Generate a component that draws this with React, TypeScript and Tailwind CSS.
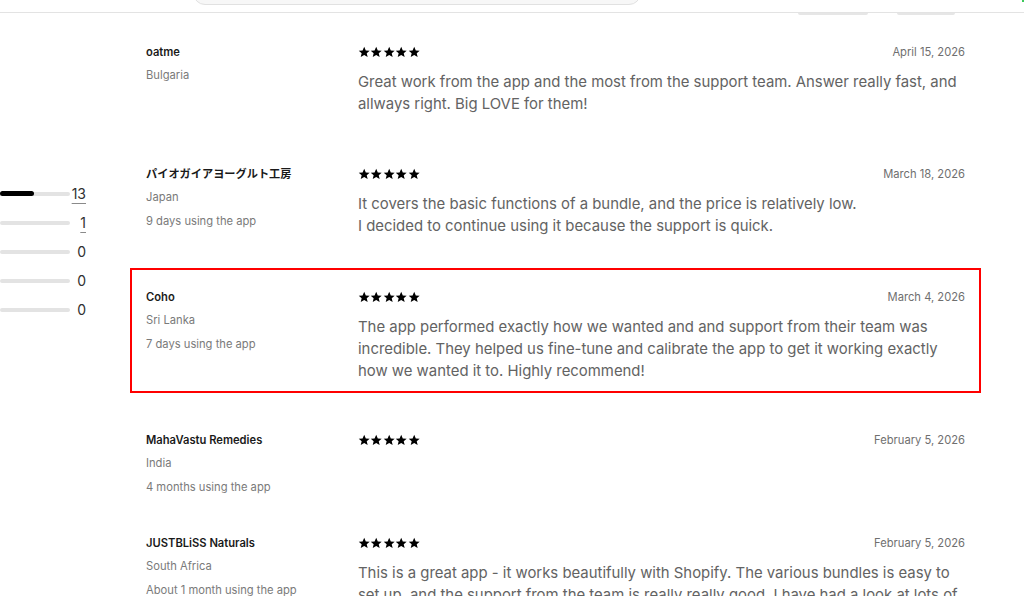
import { Fragment } from 'react';

type Review = {
  name: string;
  country: string;
  usage?: string;
  date: string;
  body: string[];
  highlight?: boolean;
  gap: string;
};

const reviews: Review[] = [
  {
    name: 'oatme',
    country: 'Bulgaria',
    date: 'April 15, 2026',
    body: ['Great work from the app and the most from the support team. Answer really fast, and allways right. Big LOVE for them!'],
    gap: 'mb-[19px]',
  },
  {
    name: 'パイオガイアヨーグルト工房',
    country: 'Japan',
    usage: '9 days using the app',
    date: 'March 18, 2026',
    body: [
      'It covers the basic functions of a bundle, and the price is relatively low.',
      'I decided to continue using it because the support is quick.',
    ],
    gap: 'mb-[20px]',
  },
  {
    name: 'Coho',
    country: 'Sri Lanka',
    usage: '7 days using the app',
    date: 'March 4, 2026',
    body: [
      'The app performed exactly how we wanted and and support from their team was incredible. They helped us fine-tune and calibrate the app to get it working exactly how we wanted it to. Highly recommend!',
    ],
    highlight: true,
    gap: 'mb-[18px]',
  },
  {
    name: 'MahaVastu Remedies',
    country: 'India',
    usage: '4 months using the app',
    date: 'February 5, 2026',
    body: [],
    gap: 'mb-[8px]',
  },
  {
    name: 'JUSTBLiSS Naturals',
    country: 'South Africa',
    usage: 'About 1 month using the app',
    date: 'February 5, 2026',
    body: [
      'This is a great app - it works beautifully with Shopify. The various bundles is easy to set up, and the support from the team is really really good. I have had a look at lots of other bundle apps and this one is by far the easiest to use.',
    ],
    gap: 'mb-[0px]',
  },
];

const ratings = [
  { count: 13, fill: 'w-[34px]', link: true },
  { count: 1, fill: 'w-0', link: true },
  { count: 0, fill: 'w-0', link: false },
  { count: 0, fill: 'w-0', link: false },
  { count: 0, fill: 'w-0', link: false },
];

function Stars() {
  return (
    <div className="flex items-center">
      {[0, 1, 2, 3, 4].map((i) => (
        <svg key={i} viewBox="0 0 24 24" className="w-[12.4px] h-[12.4px] fill-black">
          <path d="M12 1.5l3.1 7 7.5.6-5.7 4.9 1.8 7.4L12 17.5l-6.7 3.9 1.8-7.4-5.7-4.9 7.5-.6z" />
        </svg>
      ))}
    </div>
  );
}

export default function App() {
  return (
    <div className="h-[596px] w-[1024px] overflow-hidden bg-white font-[Inter,'Noto_Sans_CJK_JP',sans-serif]">
      <div className="flex h-[13px] items-start overflow-hidden border-b border-[#e3e3e3]">
        <div className="ml-[193px] -mt-[25px] h-[30px] w-[448px] rounded-[12px] border border-[#e1e1e1] bg-[#f7f7f7]" />
        <div className="ml-auto h-[2px] w-[2px] bg-[#3cc85a]" />
      </div>
      <div className="flex h-[2px]">
        <div className="ml-[798px] h-[2px] w-[70px] rounded-b-full bg-[#e6e6e6]" />
        <div className="ml-[29px] h-[2px] w-[58px] rounded-b-full bg-[#e6e6e6]" />
      </div>

      <div className="flex">
        <div className="w-[86px] shrink-0 pt-[164px]">
          {ratings.map((r, i) => (
            <div key={i} className="flex h-[29px] items-center">
              <div className="flex h-[4px] flex-1 items-center rounded-full bg-[#e3e3e3]">
                <div className={`h-[5px] rounded-full bg-black ${r.fill}`} />
              </div>
              <span
                className={`w-[16px] text-right text-[14px] leading-[20px] text-[#303030] ${
                  r.link ? 'underline decoration-[#8a8a8a] underline-offset-[4px]' : ''
                }`}
              >
                {r.count}
              </span>
            </div>
          ))}
        </div>

        <div className="ml-[44px] w-[851px] pt-[8px]">
          {reviews.map((r) => (
            <div
              key={r.name}
              className={`flex border-2 px-[14px] pt-[19px] pb-[9px] ${r.gap} ${
                r.highlight ? 'border-[#ff0000]' : 'border-transparent'
              }`}
            >
              <div className="w-[212px] shrink-0">
                <div className="text-[11.2px] font-semibold leading-[16px] text-[#1a1a1a]">{r.name}</div>
                <div className="mt-[7px] text-[11.2px] leading-[16px] text-[#7a7a7a]">{r.country}</div>
                {r.usage && (
                  <div className="mt-[8px] text-[11.2px] leading-[16px] text-[#7a7a7a]">{r.usage}</div>
                )}
              </div>
              <div className="flex-1">
                <div className="flex h-[16px] items-center justify-between">
                  <Stars />
                  <span className="text-[11.2px] leading-[16px] text-[#6f6f6f]">{r.date}</span>
                </div>
                {r.body.length > 0 && (
                  <p className="mt-[11px] text-[14.9px] leading-[22px] text-[#636363]">
                    {r.body.map((line, i) => (
                      <Fragment key={i}>
                        {i > 0 && <br />}
                        {line}
                      </Fragment>
                    ))}
                  </p>
                )}
              </div>
            </div>
          ))}
        </div>
      </div>
    </div>
  );
}
